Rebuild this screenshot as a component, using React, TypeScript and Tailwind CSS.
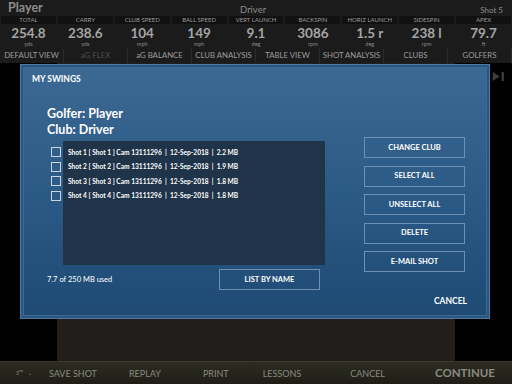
import React from 'react';

const stats = [
  { label: 'TOTAL', value: '254.8', unit: 'yds' },
  { label: 'CARRY', value: '238.6', unit: 'yds' },
  { label: 'CLUB SPEED', value: '104', unit: 'mph' },
  { label: 'BALL SPEED', value: '149', unit: 'mph' },
  { label: 'VERT LAUNCH', value: '9.1', unit: 'deg' },
  { label: 'BACKSPIN', value: '3086', unit: 'rpm' },
  { label: 'HORIZ LAUNCH', value: '1.5 r', unit: 'deg' },
  { label: 'SIDESPIN', value: '238 l', unit: 'rpm' },
  { label: 'APEX', value: '79.7', unit: 'ft' },
];

const tabs = ['DEFAULT VIEW', 'aG FLEX', 'aG BALANCE', 'CLUB ANALYSIS', 'TABLE VIEW', 'SHOT ANALYSIS', 'CLUBS', 'GOLFERS'];

const shots = [
  'Shot 1 [ Shot 1 ] Cam 13111296  |  12-Sep-2018  |  2.2 MB',
  'Shot 2 [ Shot 2 ] Cam 13111296  |  12-Sep-2018  |  1.9 MB',
  'Shot 3 [ Shot 3 ] Cam 13111296  |  12-Sep-2018  |  1.8 MB',
  'Shot 4 [ Shot 4 ] Cam 13111296  |  12-Sep-2018  |  1.8 MB',
];

const actions = ['CHANGE CLUB', 'SELECT ALL', 'UNSELECT ALL', 'DELETE', 'E-MAIL SHOT'];

function OutlineButton({ label }: { label: string }) {
  return (
    <div className="w-[101px] h-[21px] border border-[#6d8fb2] flex items-center justify-center text-[7.5px] font-bold text-white">
      {label}
    </div>
  );
}

export default function App() {
  return (
    <div className="w-[512px] h-[384px] bg-black flex flex-col overflow-hidden font-['Lato',sans-serif] text-white">
      {/* Stats header */}
      <div className="h-[63px] bg-[#1b1b1b] flex flex-col">
        <div className="h-[16px] flex items-center justify-between px-[8px] relative">
          <span className="text-[12.5px] font-bold text-[#8c8c8c] leading-none">Player</span>
          <span className="absolute left-[240px] top-[3px] text-[9.5px] text-[#8c8c8c]">Driver</span>
          <span className="text-[8px] text-[#8c8c8c] pr-[1px] pt-[3px]">Shot 5</span>
        </div>
        <div className="grid grid-cols-9 gap-x-[2px] px-[1px]">
          {stats.map((s) => (
            <div key={s.label} className="flex flex-col items-center">
              <div className="w-full h-[8px] bg-[#111111] flex items-center justify-center text-[6px] text-[#9a9a9a] leading-none">
                {s.label}
              </div>
              <div className="h-[16px] flex items-center text-[13.5px] font-bold text-[#a4a4a4] leading-none mt-[2px]">
                {s.value}
              </div>
              <div className="h-[6px] flex items-center text-[5.5px] text-[#8a8a8a] leading-none">{s.unit}</div>
            </div>
          ))}
        </div>
        <div className="grid grid-cols-8 h-[14px] mt-[1px]">
          {tabs.map((t) => (
            <div
              key={t}
              className={`flex items-center justify-center border-r border-[#2c2c2c] text-[7.8px] leading-none ${
                t === 'aG FLEX' ? 'text-[#4e4e4e]' : 'text-[#9c9c9c]'
              }`}
            >
              {t}
            </div>
          ))}
        </div>
      </div>

      {/* Main area */}
      <div className="flex-1 relative px-[57px]">
        <div className="h-full bg-[#221e1b]" />
        <div className="absolute right-[7px] top-[9px] flex items-center">
          <svg width="13" height="9" viewBox="0 0 13 10">
            <path d="M0 0 L8 5 L0 10 Z" fill="#3e3e3e" />
            <rect x="10" y="0" width="2.5" height="10" fill="#3e3e3e" />
          </svg>
        </div>

        {/* Dialog */}
        <div className="absolute left-[20px] top-[1px] w-[470px] h-[255px] border border-[#4f7aa3] p-[2px] bg-[#2a5680]">
          <div className="h-full bg-gradient-to-b from-[#3c6993] via-[#2c5a86] to-[#1e4a74] border border-[#3d6a95] relative">
            <div className="pl-[8px] pt-[5px] text-[8.5px] font-bold leading-[12px]">MY SWINGS</div>
            <div className="pl-[23px] mt-[21px] text-[12.5px] font-bold leading-[16px]">
              <div>Golfer: Player</div>
              <div>Club: Driver</div>
            </div>

            <div className="flex mt-[3px]">
              <div className="w-[318px]">
                <div className="flex pl-[27px]">
                  <div className="w-[12px] pt-[4px] flex flex-col">
                    {shots.map((s) => (
                      <div key={s} className="h-[14.5px] flex items-center">
                        <div className="w-[10px] h-[10px] border-[1.5px] border-[#c9d4df]" />
                      </div>
                    ))}
                  </div>
                  <div className="w-[262px] h-[124px] bg-[#1f3449] pt-[4px] pl-[5px]">
                    {shots.map((s) => (
                      <div key={s} className="h-[14.5px] flex items-center text-[6.6px] font-bold whitespace-pre leading-none">
                        {s}
                      </div>
                    ))}
                  </div>
                </div>
                <div className="flex items-center pl-[23px] mt-[4px]">
                  <span className="text-[7.5px] leading-none w-[172px]">7.7 of 250 MB used</span>
                  <OutlineButton label="LIST BY NAME" />
                </div>
              </div>
              <div className="flex flex-col gap-[7.5px] ml-[22px] -mt-[4px]">
                {actions.map((a) => (
                  <OutlineButton key={a} label={a} />
                ))}
              </div>
            </div>

            <div className="absolute right-[19px] bottom-[10px] text-[8.5px] font-bold leading-none">CANCEL</div>
          </div>
        </div>
      </div>

      {/* Bottom bar */}
      <div className="h-[23px] bg-gradient-to-b from-[#2c2c22] to-[#1e1e17] border-t border-[#3a3a2c] flex items-center text-[#8a8a80] text-[9px] leading-none">
        <span className="ml-[16px] text-[5px]">3ᴴᴰ</span>
        <span className="ml-[5px] text-[5px]">⌄</span>
        <span className="ml-[17px]">SAVE SHOT</span>
        <span className="ml-[32px]">REPLAY</span>
        <span className="ml-[42px]">PRINT</span>
        <span className="ml-[34px]">LESSONS</span>
        <span className="ml-[49px]">CANCEL</span>
        <span className="ml-[50px] text-[11.5px] font-bold">CONTINUE</span>
      </div>
    </div>
  );
}
